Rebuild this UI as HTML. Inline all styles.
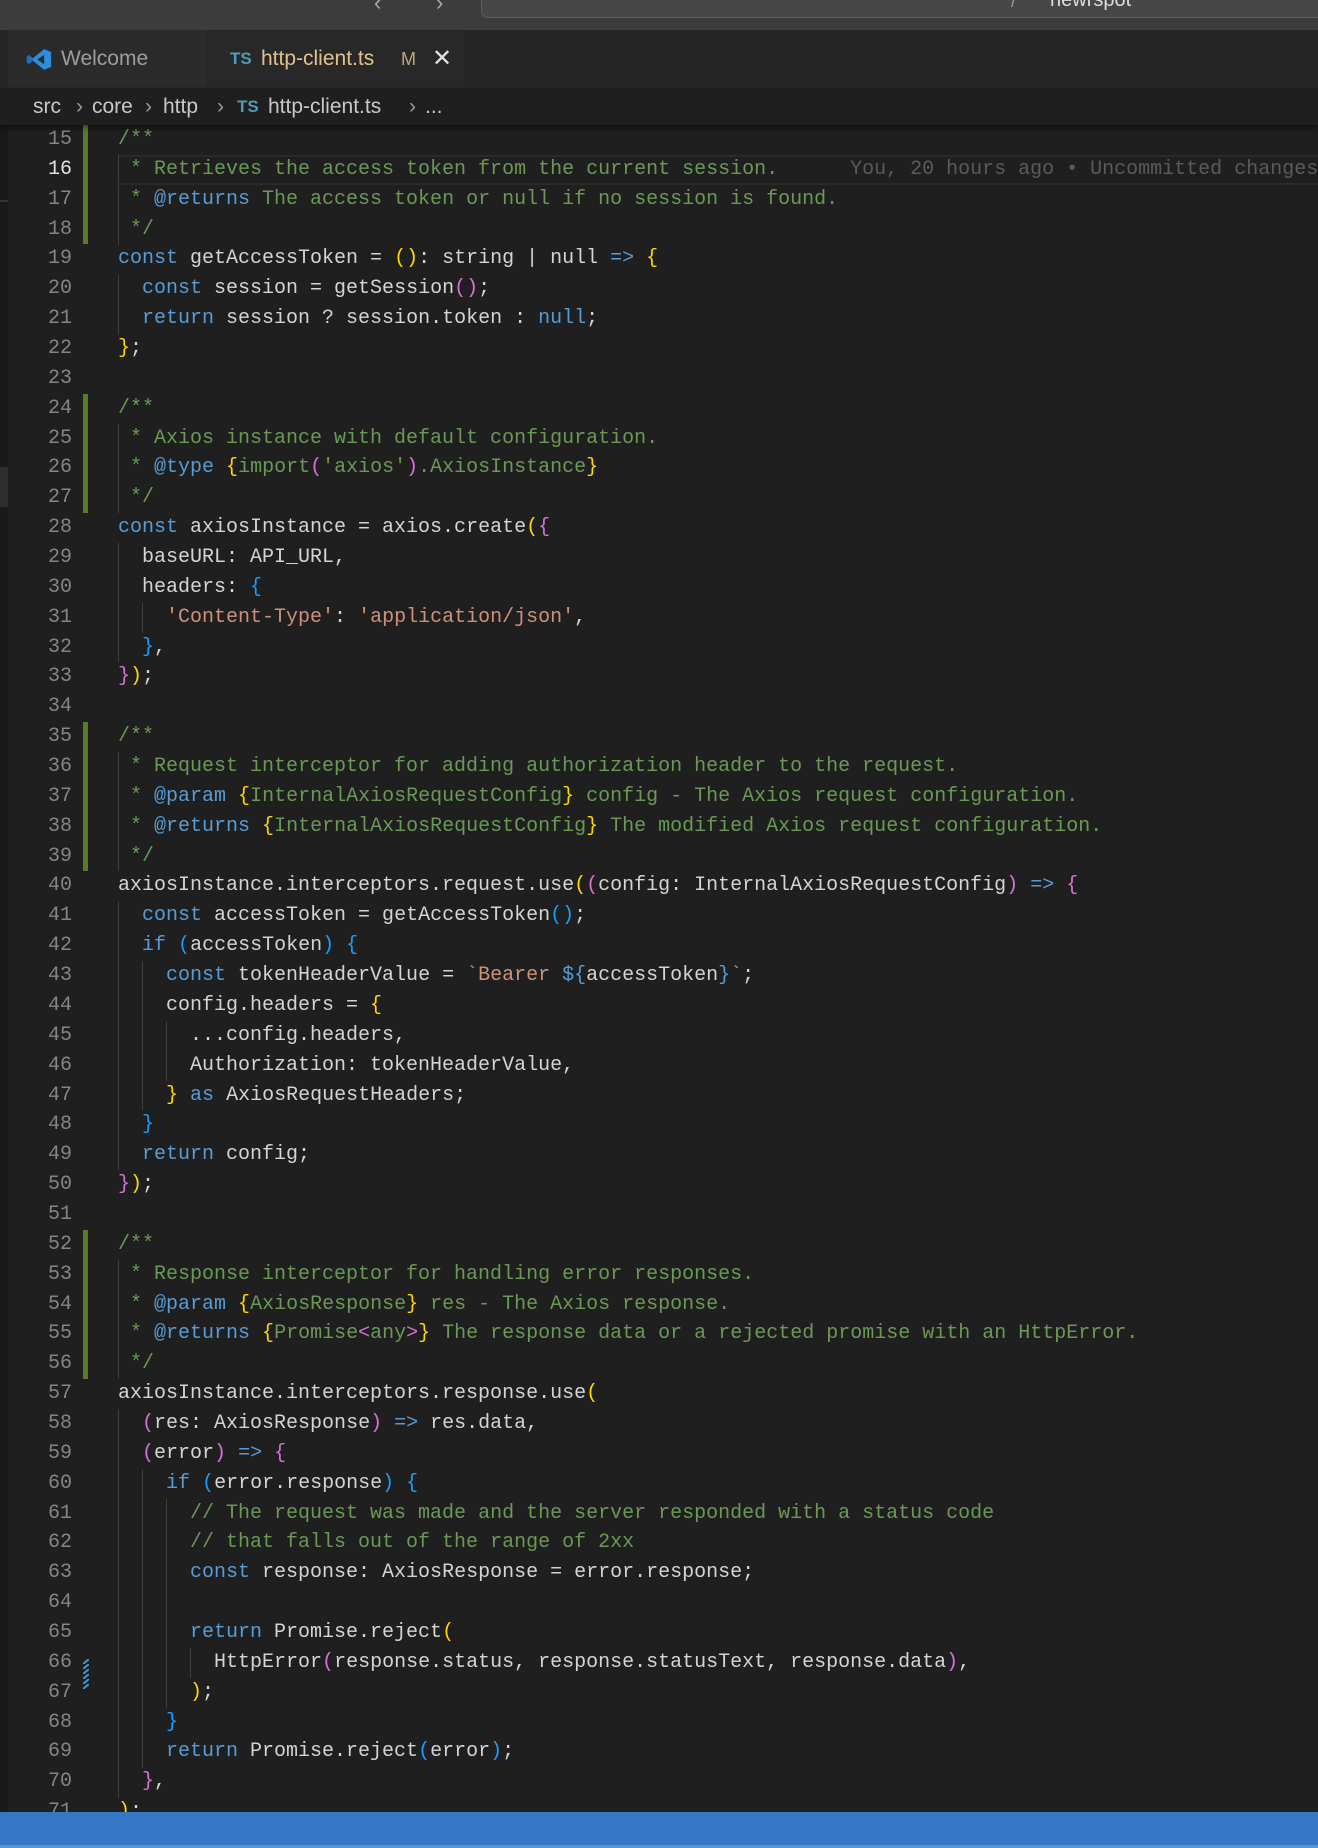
<!DOCTYPE html>
<html><head><meta charset="utf-8"><style>
*{margin:0;padding:0;box-sizing:border-box}
body{width:1318px;height:1848px;background:#1f1f1f;overflow:hidden;position:relative;font-family:"Liberation Sans",sans-serif}
.title{position:absolute;left:0;top:0;width:1318px;height:30px;background:#3c3c3c}
.search{position:absolute;left:481px;top:-12px;width:860px;height:30px;background:#474747;border:1px solid #5e5e5e;border-radius:7px}
.tabs{position:absolute;left:0;top:30px;width:1318px;height:58px;background:#252525}
.tab{position:absolute;top:0;height:58px;font-size:21px;line-height:58px}
.crumb{position:absolute;left:0;top:88px;width:1318px;height:37px;background:#1f1f1f;color:#c8c8c8;font-size:21px;line-height:37px;box-shadow:0 3px 5px rgba(0,0,0,.45);z-index:3}
.crumb span{position:absolute;top:0}
.ch{color:#999}
.strip{position:absolute;left:0;top:30px;width:8px;height:1782px;background:#191919}
.code{position:absolute;left:0;top:125px;width:1318px;font-family:"Liberation Mono",monospace;font-size:20px}
.l{height:29.86px;line-height:29.86px;white-space:pre;position:relative;color:#d4d4d4}
.n{position:absolute;left:0;width:72px;text-align:right;color:#858585}
.t{position:absolute;left:118px}
.k{color:#569cd6}.c{color:#6a9955}.s{color:#ce9178}.y{color:#ffd700}.p{color:#da70d6}.b{color:#179fff}
.g{position:absolute;left:83px;width:5px;background:#587c2a}
.ig{position:absolute;width:1px;background:#404040}
.status{position:absolute;left:0;top:1812px;width:1318px;height:36px;background:#3577c6;z-index:5}
</style></head><body>
<div class="title">
<span style="position:absolute;left:374px;top:-10px;color:#aaa;font-size:22px">‹</span>
<span style="position:absolute;left:436px;top:-10px;color:#aaa;font-size:22px">›</span>
<div class="search"></div>
<span style="position:absolute;left:1011px;top:-9px;color:#999;font-size:18px">/</span>
<span style="position:absolute;left:1050px;top:-11px;color:#ddd;font-size:20px">newrspot</span>
</div>
<div class="strip"></div>
<div style="position:absolute;left:0;top:200px;width:8px;height:2px;background:#333"></div>
<div style="position:absolute;left:0;top:467px;width:8px;height:40px;background:#2e2e2e"></div>
<div class="tabs">
<div class="tab" style="left:8px;width:198px;background:#2b2b2b;color:#9d9d9d">
<svg style="position:absolute;left:18px;top:18px" width="26" height="23" viewBox="0 0 30 26"><path d="M21 1 L29 4.5 V21.5 L21 25 L8 14.5 L3.5 18 L1 16.5 V9.5 L3.5 8 L8 11.5 Z M21 7.5 L13 13 L21 18.5 Z" fill="#2d8ee0"/><path d="M3.5 8 L8 11.5 L8 14.5 L3.5 18 L1 16.5 V9.5Z" fill="#1f6fbf"/></svg>
<span style="position:absolute;left:53px">Welcome</span></div>
<div class="tab" style="left:206px;width:258px;background:#282828">
<span style="position:absolute;left:24px;color:#519aba;font-size:17px;font-weight:bold">TS</span>
<span style="position:absolute;left:55px;color:#e2c08d">http-client.ts</span>
<span style="position:absolute;left:195px;color:#c2a67a;font-size:18px">M</span>
<span style="position:absolute;left:226px;color:#e0e0e0;font-size:24px">✕</span></div>
</div>
<div class="crumb">
<span style="left:33px">src</span><span class="ch" style="left:76px">›</span>
<span style="left:92px">core</span><span class="ch" style="left:145px">›</span>
<span style="left:163px">http</span><span class="ch" style="left:217px">›</span>
<span style="left:237px;color:#519aba;font-size:17px;font-weight:bold">TS</span>
<span style="left:268px">http-client.ts</span><span class="ch" style="left:409px">›</span>
<span style="left:425px">...</span>
</div>

<div class="g" style="top:125px;height:119px"></div>
<div class="g" style="top:394px;height:119px"></div>
<div class="g" style="top:722px;height:149px"></div>
<div class="g" style="top:1230px;height:149px"></div>
<svg style="position:absolute;left:83px;top:1659px" width="6" height="30"><defs><pattern id="h" width="6" height="5" patternUnits="userSpaceOnUse"><path d="M0 5 L6 0" stroke="#3d9ad8" stroke-width="2"/></pattern></defs><rect width="6" height="30" fill="url(#h)"/></svg>

<div style="position:absolute;left:118px;top:155px;width:1200px;height:30px;border-top:2px solid #2a2a2a;border-bottom:2px solid #2a2a2a"></div>

<div class="ig" style="left:118px;top:155px;height:90px"></div>
<div class="ig" style="left:118px;top:275px;height:60px"></div>
<div class="ig" style="left:118px;top:424px;height:89px"></div>
<div class="ig" style="left:118px;top:543px;height:119px"></div>
<div class="ig" style="left:142px;top:603px;height:30px"></div>
<div class="ig" style="left:118px;top:752px;height:119px"></div>
<div class="ig" style="left:118px;top:901px;height:269px"></div>
<div class="ig" style="left:142px;top:961px;height:149px"></div>
<div class="ig" style="left:166px;top:1021px;height:60px"></div>
<div class="ig" style="left:118px;top:1260px;height:119px"></div>
<div class="ig" style="left:118px;top:1409px;height:389px"></div>
<div class="ig" style="left:142px;top:1469px;height:299px"></div>
<div class="ig" style="left:166px;top:1499px;height:209px"></div>
<div class="ig" style="left:190px;top:1648px;height:30px"></div>

<div class="code">
<div class="l"><span class="n">15</span><span class="t c">/**</span></div>
<div class="l"><span class="n" style="color:#e0e0e0">16</span><span class="t"><span class="c"> * Retrieves the access token from the current session.</span>      <span style="color:#5a5a5a">You, 20 hours ago • Uncommitted changes</span></span></div>
<div class="l"><span class="n">17</span><span class="t c"> * <span class="k">@returns</span> The access token or null if no session is found.</span></div>
<div class="l"><span class="n">18</span><span class="t c"> */</span></div>
<div class="l"><span class="n">19</span><span class="t"><span class="k">const</span> getAccessToken = <span class="y">()</span>: string | null <span class="k">=&gt;</span> <span class="y">{</span></span></div>
<div class="l"><span class="n">20</span><span class="t">  <span class="k">const</span> session = getSession<span class="p">()</span>;</span></div>
<div class="l"><span class="n">21</span><span class="t">  <span class="k">return</span> session ? session.token : <span class="k">null</span>;</span></div>
<div class="l"><span class="n">22</span><span class="t"><span class="y">}</span>;</span></div>
<div class="l"><span class="n">23</span></div>
<div class="l"><span class="n">24</span><span class="t c">/**</span></div>
<div class="l"><span class="n">25</span><span class="t c"> * Axios instance with default configuration.</span></div>
<div class="l"><span class="n">26</span><span class="t c"> * <span class="k">@type</span> <span class="y">{</span>import<span class="p">(</span>'axios'<span class="p">)</span>.AxiosInstance<span class="y">}</span></span></div>
<div class="l"><span class="n">27</span><span class="t c"> */</span></div>
<div class="l"><span class="n">28</span><span class="t"><span class="k">const</span> axiosInstance = axios.create<span class="y">(</span><span class="p">{</span></span></div>
<div class="l"><span class="n">29</span><span class="t">  baseURL: API_URL,</span></div>
<div class="l"><span class="n">30</span><span class="t">  headers: <span class="b">{</span></span></div>
<div class="l"><span class="n">31</span><span class="t">    <span class="s">'Content-Type'</span>: <span class="s">'application/json'</span>,</span></div>
<div class="l"><span class="n">32</span><span class="t">  <span class="b">}</span>,</span></div>
<div class="l"><span class="n">33</span><span class="t"><span class="p">}</span><span class="y">)</span>;</span></div>
<div class="l"><span class="n">34</span></div>
<div class="l"><span class="n">35</span><span class="t c">/**</span></div>
<div class="l"><span class="n">36</span><span class="t c"> * Request interceptor for adding authorization header to the request.</span></div>
<div class="l"><span class="n">37</span><span class="t c"> * <span class="k">@param</span> <span class="y">{</span>InternalAxiosRequestConfig<span class="y">}</span> config - The Axios request configuration.</span></div>
<div class="l"><span class="n">38</span><span class="t c"> * <span class="k">@returns</span> <span class="y">{</span>InternalAxiosRequestConfig<span class="y">}</span> The modified Axios request configuration.</span></div>
<div class="l"><span class="n">39</span><span class="t c"> */</span></div>
<div class="l"><span class="n">40</span><span class="t">axiosInstance.interceptors.request.use<span class="y">(</span><span class="p">(</span>config: InternalAxiosRequestConfig<span class="p">)</span> <span class="k">=&gt;</span> <span class="p">{</span></span></div>
<div class="l"><span class="n">41</span><span class="t">  <span class="k">const</span> accessToken = getAccessToken<span class="b">()</span>;</span></div>
<div class="l"><span class="n">42</span><span class="t">  <span class="k">if</span> <span class="b">(</span>accessToken<span class="b">)</span> <span class="b">{</span></span></div>
<div class="l"><span class="n">43</span><span class="t">    <span class="k">const</span> tokenHeaderValue = <span class="s">`Bearer </span><span class="k">${</span>accessToken<span class="k">}</span><span class="s">`</span>;</span></div>
<div class="l"><span class="n">44</span><span class="t">    config.headers = <span class="y">{</span></span></div>
<div class="l"><span class="n">45</span><span class="t">      ...config.headers,</span></div>
<div class="l"><span class="n">46</span><span class="t">      Authorization: tokenHeaderValue,</span></div>
<div class="l"><span class="n">47</span><span class="t">    <span class="y">}</span> <span class="k">as</span> AxiosRequestHeaders;</span></div>
<div class="l"><span class="n">48</span><span class="t">  <span class="b">}</span></span></div>
<div class="l"><span class="n">49</span><span class="t">  <span class="k">return</span> config;</span></div>
<div class="l"><span class="n">50</span><span class="t"><span class="p">}</span><span class="y">)</span>;</span></div>
<div class="l"><span class="n">51</span></div>
<div class="l"><span class="n">52</span><span class="t c">/**</span></div>
<div class="l"><span class="n">53</span><span class="t c"> * Response interceptor for handling error responses.</span></div>
<div class="l"><span class="n">54</span><span class="t c"> * <span class="k">@param</span> <span class="y">{</span>AxiosResponse<span class="y">}</span> res - The Axios response.</span></div>
<div class="l"><span class="n">55</span><span class="t c"> * <span class="k">@returns</span> <span class="y">{</span>Promise<span class="p">&lt;</span>any<span class="p">&gt;</span><span class="y">}</span> The response data or a rejected promise with an HttpError.</span></div>
<div class="l"><span class="n">56</span><span class="t c"> */</span></div>
<div class="l"><span class="n">57</span><span class="t">axiosInstance.interceptors.response.use<span class="y">(</span></span></div>
<div class="l"><span class="n">58</span><span class="t">  <span class="p">(</span>res: AxiosResponse<span class="p">)</span> <span class="k">=&gt;</span> res.data,</span></div>
<div class="l"><span class="n">59</span><span class="t">  <span class="p">(</span>error<span class="p">)</span> <span class="k">=&gt;</span> <span class="p">{</span></span></div>
<div class="l"><span class="n">60</span><span class="t">    <span class="k">if</span> <span class="b">(</span>error.response<span class="b">)</span> <span class="b">{</span></span></div>
<div class="l"><span class="n">61</span><span class="t">      <span class="c">// The request was made and the server responded with a status code</span></span></div>
<div class="l"><span class="n">62</span><span class="t">      <span class="c">// that falls out of the range of 2xx</span></span></div>
<div class="l"><span class="n">63</span><span class="t">      <span class="k">const</span> response: AxiosResponse = error.response;</span></div>
<div class="l"><span class="n">64</span></div>
<div class="l"><span class="n">65</span><span class="t">      <span class="k">return</span> Promise.reject<span class="y">(</span></span></div>
<div class="l"><span class="n">66</span><span class="t">        HttpError<span class="p">(</span>response.status, response.statusText, response.data<span class="p">)</span>,</span></div>
<div class="l"><span class="n">67</span><span class="t">      <span class="y">)</span>;</span></div>
<div class="l"><span class="n">68</span><span class="t">    <span class="b">}</span></span></div>
<div class="l"><span class="n">69</span><span class="t">    <span class="k">return</span> Promise.reject<span class="b">(</span>error<span class="b">)</span>;</span></div>
<div class="l"><span class="n">70</span><span class="t">  <span class="p">}</span>,</span></div>
<div class="l"><span class="n">71</span><span class="t"><span class="y">)</span>;</span></div>
</div>
<div class="status"></div>
<div style="position:absolute;left:0;top:1845px;width:1318px;height:3px;background:#5a93d4;z-index:6"></div>
</body></html>
